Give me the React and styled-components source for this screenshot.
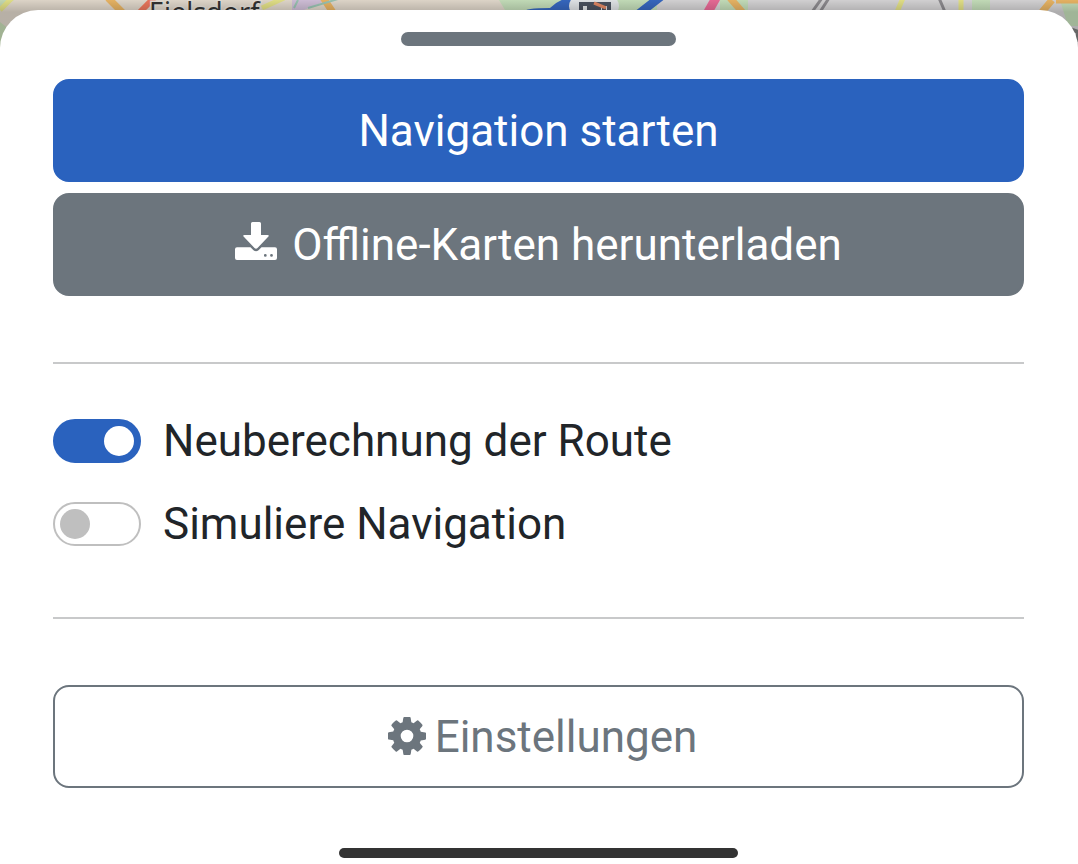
import React, { useState } from 'react';
import styled, { createGlobalStyle } from 'styled-components';

const GlobalStyle = createGlobalStyle`
  * {
    box-sizing: border-box;
  }
  body {
    margin: 0;
    background: #fff;
    color: #212529;
    font-family: Roboto, sans-serif;
    font-size: 44px;
    line-height: 66px;
  }
`;

const Page = styled.div`
  position: relative;
  padding-top: 10px;
`;

/* The map lies behind the rounded corners of the sheet */
const MapStrip = styled.svg`
  position: absolute;
  top: 0;
  left: 0;
  width: 100%;
  height: 48px;
`;

const Sheet = styled.main`
  position: relative;
  display: flex;
  flex-direction: column;
  padding: 22px 54px 6px 53px;
  border-radius: 38px 38px 0 0;
  background: #fff;
`;

const Handle = styled.button`
  align-self: center;
  width: 275px;
  height: 14px;
  margin-bottom: 33px;
  padding: 0;
  border: 0;
  border-radius: 7px;
  background: #6c757d;
`;

const Actions = styled.div`
  display: flex;
  flex-direction: column;
  gap: 11px;
  margin-bottom: 66px;
`;

const Button = styled.button`
  width: 100%;
  height: 103px;
  padding: 0 16px;
  border: 2px solid #6c757d;
  border-radius: 16px;
  background: #6c757d;
  color: #fff;
  font: inherit;
  text-align: center;

  svg {
    margin-right: 15px;
  }
`;

const PrimaryButton = styled(Button)`
  border-color: #2a62be;
  background: #2a62be;
`;

const OutlineButton = styled(Button)`
  margin-top: 66px;
  padding-left: 24px;
  background: #fff;
  color: #6c757d;

  svg {
    margin-right: 9px;
    vertical-align: -3px;
  }
`;

const Divider = styled.hr`
  width: 100%;
  height: 2px;
  margin: 0;
  border: 0;
  background: #c8c9ca;
`;

const Options = styled.div`
  display: flex;
  flex-direction: column;
  gap: 17px;
  margin: 44px 0 60px;
`;

const Option = styled.label`
  display: flex;
  align-items: center;
  gap: 22px;
`;

const Switch = styled.input`
  appearance: none;
  display: flex;
  align-items: center;
  width: 88px;
  height: 44px;
  margin: 0;
  padding: 0 5px;
  border: 2px solid #bfbfbf;
  border-radius: 22px;
  background: #fff;

  &::before {
    content: '';
    width: 30px;
    height: 30px;
    border-radius: 50%;
    background: #bfbfbf;
  }

  &:checked {
    justify-content: flex-end;
    border-color: #2a62be;
    background: #2a62be;
  }

  &:checked::before {
    background: #fff;
  }
`;

const HomeBar = styled.div`
  align-self: center;
  width: 399px;
  height: 10px;
  margin-top: 60px;
  border-radius: 5px;
  background: #333;
`;

const DownloadIcon = () => (
  <svg width="42" height="38" viewBox="0 0 42 38" fill="currentColor" aria-hidden="true">
    <path d="M17.5 0h7q1.500 0 1.500 1.500V13h6.500q2.200 0 .7 1.800L22.500 26q-1.500 1.500-3 0L8.800 14.800q-1.500-1.800.7-1.800H16V1.500q0-1.500 1.500-1.500z" />
    <path
      fillRule="evenodd"
      d="M2 25.200h13.500l3 3q2.500 2 5 0l3-3H40q2 0 2 2V36q0 2-2 2H2q-2 0-2-2v-8.800q0-2 2-2zM30.300 32a1.400 1.400 0 1 0 .01 2.800 1.400 1.400 0 0 0-.01-2.800zm6.200 0a1.400 1.400 0 1 0 .01 2.800 1.400 1.400 0 0 0-.01-2.800z"
    />
  </svg>
);

const GearIcon = () => (
  <svg width="38" height="38" viewBox="128 128 1536 1536" fill="currentColor" aria-hidden="true">
    <path d="M1152 896q0-106-75-181t-181-75-181 75-75 181 75 181 181 75 181-75 75-181zm512-109v222q0 12-8 23t-20 13l-185 28q-19 54-39 91 35 50 107 138 10 12 10 25t-9 23q-27 37-99 108t-94 71q-12 0-26-9l-138-108q-44 23-91 38-16 136-29 186-7 28-36 28h-222q-14 0-24.500-8.500t-11.500-21.500l-28-184q-49-16-90-37l-141 107q-10 9-25 9-14 0-25-11-126-114-165-168-7-10-7-23 0-12 8-23 15-21 51-66.500t54-70.500q-27-50-41-99l-183-27q-13-2-21-12.500t-8-23.500v-222q0-12 8-23t19-13l186-28q14-46 39-92-40-57-107-138-10-12-10-24 0-10 9-23 26-36 98.500-107.500t94.500-71.500q13 0 26 10l138 107q44-23 91-38 16-136 29-186 7-28 36-28h222q14 0 24.500 8.500t11.500 21.500l28 184q49 16 90 37l142-107q9-9 24-9 13 0 25 10 129 119 165 170 7 8 7 22 0 12-8 23-15 21-51 66.500t-54 70.500q26 50 41 98l183 28q13 2 21 12.500t8 23.500z" />
  </svg>
);

const Map = () => (
  <MapStrip viewBox="0 0 1078 48" preserveAspectRatio="xMidYMin slice" aria-hidden="true">
    <defs>
      <linearGradient id="shade" x2="0" y2="1">
        <stop offset="0" stopColor="#000" stopOpacity="0.04" />
        <stop offset="0.25" stopColor="#000" stopOpacity="0.2" />
      </linearGradient>
    </defs>
    <rect width="1078" height="48" fill="#e5dccf" />
    <path d="M0 0h14L0 8zM0 22l10 8v18H0z" fill="#c9dfb8" />
    <path d="M499 0h158l14 10H505zM720 10V0h28l14 10zM972 0h18v10h-18zM1060 0h18v28h-18z" fill="#c8e2bd" />
    <path d="M657 0h63v10h-63zM748 0h224v10H748zM990 0h88v48h-20L1030 10h-40z" fill="#d9d8d9" />
    <path d="M1060 0h18v26h-10z" fill="#c8e2bd" />
    <path d="M292 0h36l-24 10h-12z" fill="#d4c3dc" />
    <path d="M108-2l16 16M322-4l12 18M730-2l14 16M1052 0l-10 12M1056 0h24" stroke="#edb866" strokeWidth="7" fill="none" />
    <path d="M156-4l-16 16" stroke="#f0795d" strokeWidth="6" />
    <path d="M0 10L12-2M262 8l22-10M903-2l-6 14M961-2v14" stroke="#e7e58a" strokeWidth="5" />
    <path d="M812 12l10-14M820 12l9-14M939-2l6 14" stroke="#8f8d91" strokeWidth="3" />
    <path d="M294 8l4-8M308 8l30-9" stroke="#9cc7b5" strokeWidth="2" />
    <path d="M708 12l8-14" stroke="#ed6c9a" strokeWidth="9" />
    <path d="M524 12q0-4 26-4 10-10 22-10h12l-10 14zM634 12l18-14h14l-18 14z" fill="#3769c3" />
    <ellipse cx="594" cy="6" rx="25" ry="16" fill="#e6e9ec" />
    <path d="M581 14V4h28v10M589 14V8h10v6M604 14V8" stroke="#4c5361" strokeWidth="4" fill="none" />
    <path d="M594 3l12 5" stroke="#e58a66" strokeWidth="3" />
    <text x="149" y="22" fontFamily="Noto Sans" fontSize="27" fill="#333" stroke="#e9e3da" strokeWidth="3" paintOrder="stroke">
      Eielsdorf
    </text>
    <rect width="1078" height="48" fill="url(#shade)" />
    <path d="M1070 29l8 3v10" stroke="#666" strokeWidth="4" fill="none" />
  </MapStrip>
);

export default function App() {
  const [reroute, setReroute] = useState(true);
  const [simulate, setSimulate] = useState(false);

  return (
    <Page>
      <GlobalStyle />
      <Map />
      <Sheet>
        <Handle type="button" aria-expanded="true" />
        <Actions>
          <PrimaryButton type="button">Navigation starten</PrimaryButton>
          <Button type="button">
            <DownloadIcon />
            Offline-Karten herunterladen
          </Button>
        </Actions>
        <Divider />
        <Options>
          <Option>
            <Switch type="checkbox" checked={reroute} onChange={(e) => setReroute(e.target.checked)} />
            Neuberechnung der Route
          </Option>
          <Option>
            <Switch type="checkbox" checked={simulate} onChange={(e) => setSimulate(e.target.checked)} />
            Simuliere Navigation
          </Option>
        </Options>
        <Divider />
        <OutlineButton type="button">
          <GearIcon />
          Einstellungen
        </OutlineButton>
        <HomeBar />
      </Sheet>
    </Page>
  );
}
